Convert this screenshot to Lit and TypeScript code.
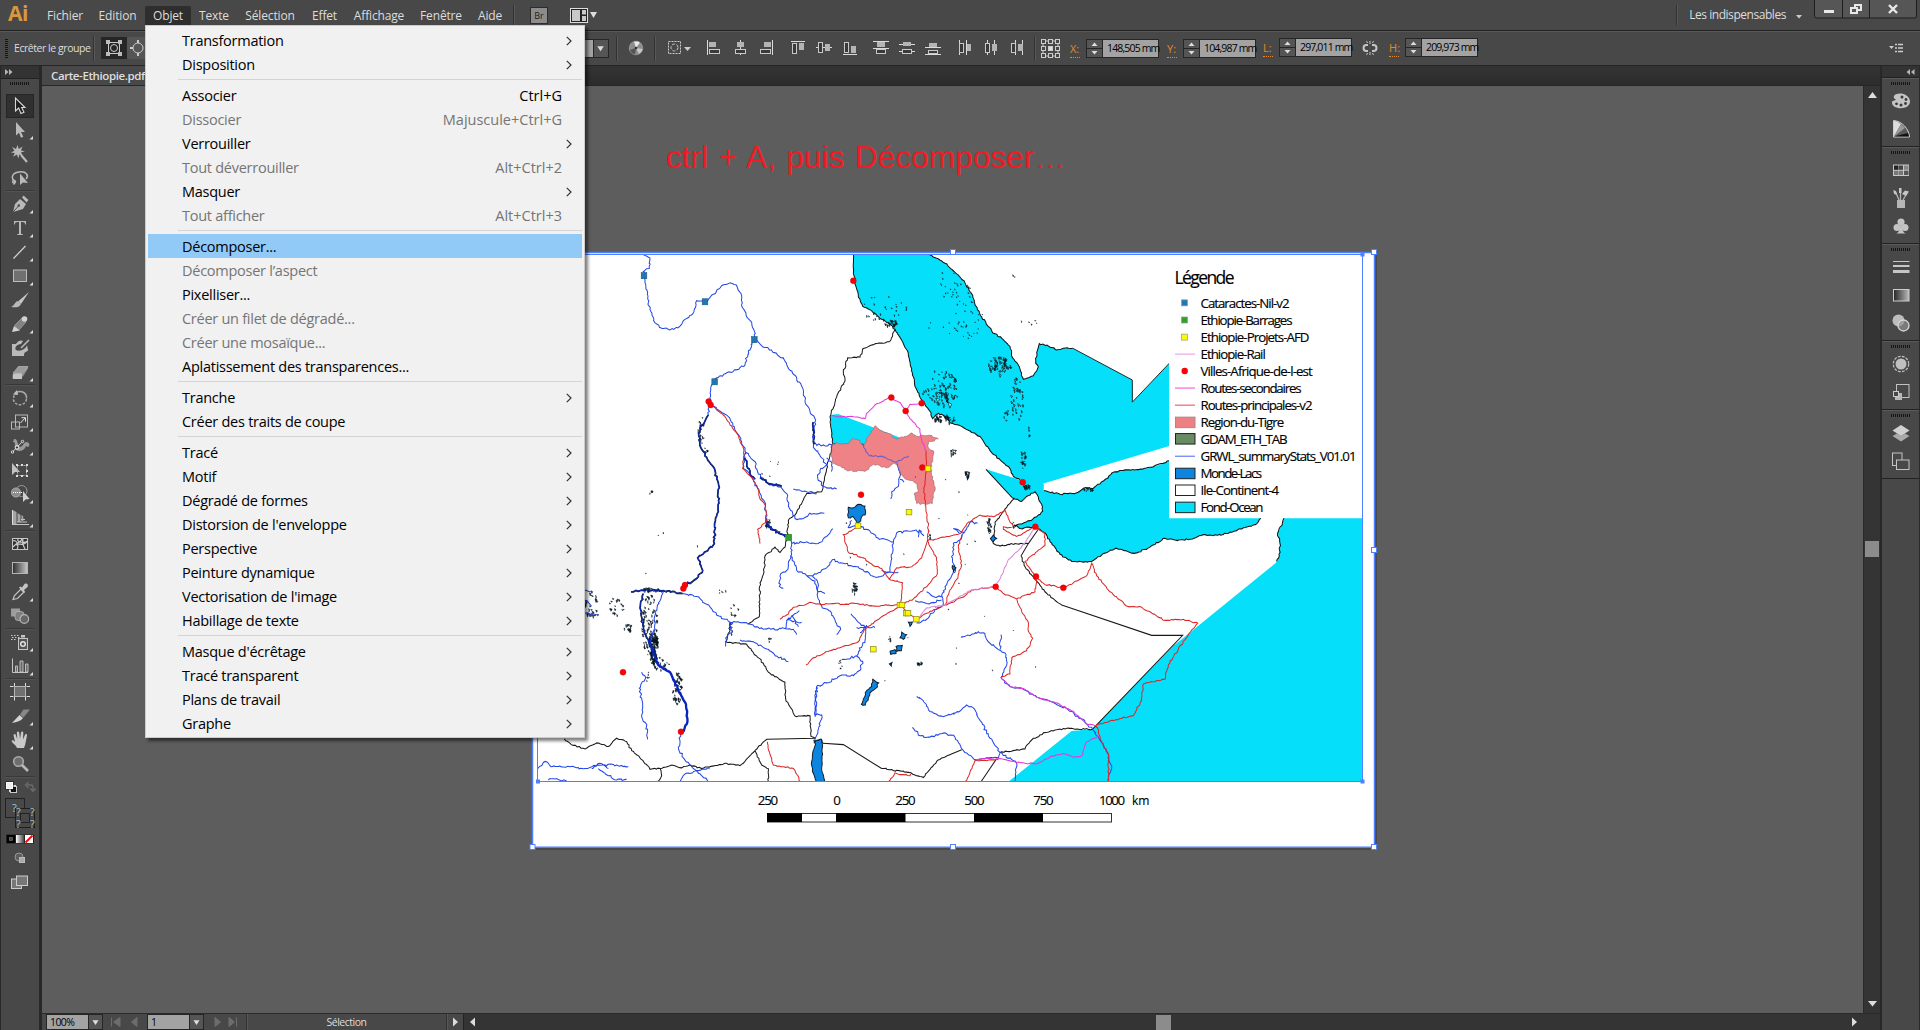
import { LitElement, html, svg, css, nothing, SVGTemplateResult } from "lit";
import { customElement, property } from "lit/decorators.js";

type Pt = [number, number];

/* ---------- geometry helpers ---------- */

// Small seeded generator so coastlines come out the same on every render.
function generator(seed: number) {
  let s = seed >>> 0;
  return () => {
    s = (s * 1664525 + 1013904223) >>> 0;
    return s / 4294967296;
  };
}

// Parses "x,y x,y" and shifts x into the shared map space.
function pts(src: string, dx = 0): Pt[] {
  return src.trim().split(/\s+/).map((p) => {
    const [x, y] = p.split(",").map(Number);
    return [x + dx, y] as Pt;
  });
}

// Polyline with a fine irregular edge; long straight legs can stay straight.
function rough(points: Pt[], amp = 3, close = false, straight = 9999): string {
  const rnd = generator(Math.round(points[0][0] * 7 + points[0][1] * 13));
  const list = close ? [...points, points[0]] : points;
  let d = `M${list[0][0]} ${list[0][1]}`;
  for (let i = 1; i < list.length; i++) {
    const [ax, ay] = list[i - 1];
    const [bx, by] = list[i];
    const len = Math.hypot(bx - ax, by - ay);
    const n = len > straight ? 1 : Math.max(1, Math.round(len / 6));
    for (let k = 1; k < n; k++) {
      const t = k / n;
      const x = ax + (bx - ax) * t + (rnd() - 0.5) * 2 * amp;
      const y = ay + (by - ay) * t + (rnd() - 0.5) * 2 * amp;
      d += `L${x.toFixed(1)} ${y.toFixed(1)}`;
    }
    d += `L${bx} ${by}`;
  }
  return close ? d + "Z" : d;
}

function specks(cx: number, cy: number, rx: number, ry: number, n: number, size = 4): string {
  const rnd = generator(cx * 31 + cy * 17 + n);
  let d = "";
  for (let i = 0; i < n * 0.75; i++) {
    const a = rnd() * Math.PI * 2;
    const r = Math.sqrt(rnd());
    const x = cx + Math.cos(a) * rx * r;
    const y = cy + Math.sin(a) * ry * r;
    const w = 1 + rnd() * size;
    const h = 1 + rnd() * size;
    d += `M${x.toFixed(0)} ${y.toFixed(0)}l${w.toFixed(1)} ${(h / 2).toFixed(1)}l${(-w / 2).toFixed(1)} ${h.toFixed(1)}z`;
  }
  return d;
}

const E = 1200;

/* ---------- map data ---------- */

const YEMEN = pts("28,41 75,65 110,95 135,120 155,150 165,180 185,215 215,255 245,275 270,298 278,330 295,350 310,390 340,380 355,355 347,345 350,315 358,290 385,297 410,308 430,303 458,303", E);
const YEMEN_EDGE = pts("458,303 637,392 637,454 748,345", E);
const ADEN_NORTH = pts("370,682 372,702 385,705 420,712 470,708 490,695 520,695 550,675 580,650 610,645 655,643 700,635 748,618", E);
const SOMALIA = pts("1022,779 1010,795 975,805 920,822 880,828 850,825 810,838 765,840 735,835 690,860 650,876 630,875 588,863 550,878 515,900 490,902 455,900 420,880 390,845 375,820 345,803 300,808 285,800 305,795 350,775 368,760 365,740 345,705 320,718 305,732 277,722 198,642", E);
const AFRICA_COAST = pts("300,672 280,662 270,640 245,620 210,590 180,550 150,535 115,518 90,512 75,495 55,485 38,500 30,480 15,460 0,440 -15,410 -25,360 -35,320 -50,290 -75,250 -90,235 -120,220 -150,195 -172,185 -185,160 -192,130 -198,100 -200,41", E);
const EAST_COAST = pts("1092,779 1085,800 1073,820 1080,850 1078,885 1070,900", E);

function joined(...parts: Pt[][]): string {
  return parts.map((p, i) => rough(p, i % 2 ? 1.5 : 2, false, 110).replace("M", i ? "L" : "M")).join("") + "Z";
}

const OCEAN = joined(YEMEN, YEMEN_EDGE, pts("748,577", E), ADEN_NORTH, pts("748,779", E), SOMALIA, AFRICA_COAST);

const TIGRE = pts("938,570 985,570 1000,555 1015,560 1030,578 1045,550 1065,520 1080,532 1105,542 1125,555 1150,552 1175,540 1190,550 1215,548 1235,547 1255,557 1225,565 1225,582 1240,590 1238,620 1232,640 1237,670 1245,690 1240,710 1237,738 1190,738 1182,710 1195,705 1190,680 1165,672 1140,655 1138,635 1125,625 1100,638 1060,628 1040,645 1010,648 980,645 955,632 940,625 930,600");

const RIVERS: Pt[][] = [
  pts("370,41 390,50 388,80 370,88 375,120 383,165 390,195 405,232 430,248 450,252 478,243 500,220 522,200 530,170 555,173 580,152 605,128 630,120 648,125 665,155 665,180 678,210 695,230 703,255 703,279 685,310 675,350 640,368 600,380 583,397 573,410 570,450 565,490"),
  pts("703,279 725,295 790,330 805,360 830,385 850,420 855,450 870,480 887,505 880,540 880,580 905,610 920,630 900,645 893,665 910,690 950,697"),
  pts("880,570 915,577 945,570"), pts("920,610 936,625 934,648"), pts("820,697 855,703 890,710"),
  pts("572,462 610,485 630,500 655,545 675,590 670,640 690,655 705,680 720,710 735,735 740,790 760,812 805,833 815,850 812,885 830,925 860,940 885,955 893,1000 905,1025 935,1045 950,1075 962,1090 950,1105"),
  pts("675,590 705,620 715,655 745,682 785,695 803,715 805,745 825,780 850,780 870,765 913,765"),
  pts("815,850 860,845 895,850 920,830 938,808"),
  pts("812,885 800,925 782,935 778,970 790,975"),
  pts("860,940 890,935 920,918 937,895 970,905 1010,915 1070,945 1110,930 1120,850 1130,820 1165,815 1205,815"),
  pts("1195,832 1198,812 1212,828"), pts("1085,925 1110,930 1135,930"),
  pts("1120,845 1075,835 1050,815 1010,800 985,805 995,785"),
  pts("875,940 892,955 895,985 915,990"),
  pts("488,990 530,998 560,1020 590,1050 630,1070 680,1072 730,1090 795,1088 820,1090 830,1105"),
  pts("795,1088 800,1065 820,1050 838,1038"), pts("800,1065 845,1070"), pts("815,1050 835,1083"),
  pts("660,1120 700,1125 740,1145 770,1165 805,1180"),
  pts("630,1070 635,1100 617,1115 617,1138"),
  pts("993,1047 1010,1065 1035,1085 1035,1120 1010,1165 1028,1180 1020,1205 1000,1220 960,1220 920,1240 890,1250 887,1330 905,1330 895,1370 885,1400"),
  pts("890,1250 884,1300 886,1335"), pts("1010,1085 1065,1085"), pts("1020,1100 1040,1078"), pts("1010,1165 965,1175"),
  pts("430,985 420,1010 405,1040 405,1090 385,1130"),
  pts("365,1210 377,1225 358,1255 368,1300 365,1330 380,1360 383,1398"),
  pts("53,1480 75,1460 95,1475 150,1475 195,1480 235,1470 290,1470 325,1475"),
  pts("215,1480 240,1465 265,1480"), pts("235,1480 265,1500 290,1512 320,1510"), pts("85,1512 110,1508 140,1515"),
  pts("480,1517 495,1495 540,1485 570,1478"),
  pts("483,1377 475,1420 490,1450 520,1480 545,1500 565,1517"),
  pts("195,980 215,985"), pts("195,1045 230,1050"), pts("195,1010 215,1025"),
  pts("-10,1072 20,1062 45,1035 70,1020 65,995 80,965 95,940 105,930 97,890 100,850 120,840 135,815 150,790 173,793", E),
  pts("1185,1010 1220,1018 1265,1008"), pts("1220,985 1240,998 1268,1000"), pts("100,808 135,818", E),
  pts("1300,808 1318,820"),
  pts("123,1112 150,1108 175,1097 195,1102 205,1125 235,1147 258,1160 260,1190 243,1225 270,1250 310,1258 350,1280 400,1295 455,1320 500,1355 517,1370 535,1390 560,1430 575,1480 565,1517", E),
  pts("240,1147 243,1105", E),
  pts("1190,1278 1210,1290 1230,1320 1270,1335 1305,1325 1340,1302 1360,1310 1380,1345 1410,1395 1440,1435 1490,1465 1485,1517"),
  pts("1177,1365 1200,1388 1230,1392 1275,1380 1305,1392 1325,1425 1365,1455 1435,1450 1440,1435"),
  pts("1025,570 1050,605 1090,608 1130,622 1167,605"),
  pts("1130,622 1140,650 1135,690 1115,705 1112,725"), pts("1140,670 1152,678"),
];

const WIDE_RIVERS: Pt[][] = [
  pts("565,490 540,525 537,560 555,605 580,635 595,680 595,760 585,790 583,850 533,890 548,925 530,948 495,967"),
  pts("740,780 742,800 760,812 795,832"), pts("675,610 690,655 705,670"), pts("720,665 745,682 785,690"),
  pts("488,990 430,982 375,980 333,985"), pts("880,510 880,545 882,572"),
  pts("370,990 360,1030 370,1090 390,1135 415,1190"),
];

const ROADS: Pt[][] = [
  pts("572,462 610,490 650,540 672,590 668,640 700,670 715,700 720,725 737,745 738,790 713,810 720,850"),
  pts("1218,590 1220,640 1212,700 1218,760 1225,800 1222,842 1250,890 1252,935 1225,965 1180,1005 1143,1020"),
  pts("1222,842 1205,890 1175,915 1130,918 1108,950"),
  pts("1010,805 970,825 985,875 1030,890 1060,912 1085,920 1108,950 1148,960 1143,1020"),
  pts("1222,842 1280,830 1320,822 1345,790 1380,770 1420,775 1455,757 1470,790 1480,800"),
  pts("345,803 320,815 290,830 272,822 250,810 250,803 275,805", E),
  pts("1143,1020 1060,1025 1010,1018 900,1020 875,1015 820,1028 800,1050 780,1062"),
  pts("1143,1025 1085,1055 1035,1090 1015,1125 930,1150 880,1170 858,1190"),
  pts("1143,1020 1165,1045 1188,1062 1220,1045 1275,1022 1330,1000 1355,980 1427,970 1450,990 1490,1005 1545,985 1550,955 1547,942 1530,920 1515,900 1575,855 1575,825 1545,803"),
  pts("347,942 375,965 430,973 460,960 500,940 515,905 530,940 570,985 620,1025 665,1028 735,1065 790,1062 833,1073 805,1105 775,1145 745,1190 735,1230 670,1243 665,1290 640,1332 600,1340 530,1357 540,1395 565,1440 565,1517", E),
  pts("290,1005 305,1040 325,1070 325,1095 338,1115 320,1150 275,1170 270,1215 243,1225", E),
  pts("75,1022 90,980 110,950 125,910 115,860 125,825", E),
  pts("742,1405 750,1440 760,1470 820,1480 842,1517"),
  pts("235,1455 165,1458 150,1490 135,1517", E),
  pts("1105,1517 1125,1492 1170,1500 1172,1495"),
];

const MINOR_ROADS: Pt[][] = [
  pts("935,492 960,495 1000,495 1035,500 1040,485 1065,462 1110,440 1140,455 1157,478 1170,460 1205,457"),
  pts("1157,478 1170,500 1200,530 1205,560 1218,590"),
  pts("243,1225 270,1250 310,1256 350,1280 400,1293 455,1318 500,1355 530,1360", E),
  pts("537,1390 500,1405 485,1445 460,1448 430,1438 390,1447 350,1467 290,1463 240,1452 170,1454", E),
];

const RAIL = pts("345,803 320,840 295,870 265,895 250,930 227,970 155,980 75,1022 20,1030 0,1055", E);

const BORDERS: Pt[][] = [
  pts("1125,250 1108,285 1060,293 1028,305 1020,328 983,330 970,370 975,395 950,440 930,495 938,570 930,600 915,660 905,705 860,710 825,770 805,785 800,840 795,860 780,875 765,860 735,885 732,930 720,960 718,1055 685,1075"),
  pts("630,1070 628,1098 617,1125 680,1132 700,1155 730,1185 745,1210 795,1238 797,1285 825,1333 870,1332 873,1390 887,1395"),
  pts("740,1398 705,1430 660,1472 615,1465 545,1480 510,1470 485,1478 455,1470 420,1480 390,1482 360,1450 335,1430 320,1405 290,1395 265,1418 230,1408 195,1425 160,1415 133,1397"),
  pts("705,1430 725,1470 745,1480 745,1517"), pts("420,1480 425,1500 412,1517"),
  pts("1085,1480 1160,1490 1210,1505 1250,1460 1280,1445"),
  pts("283,722 225,790 220,850 240,857 285,850 325,850", E),
  pts("303,885 315,915 345,950 375,985 425,1022", E),
  pts("517,1370 430,1368 370,1380 335,1400 315,1425 240,1435", E),
];

const STRAIGHT_BORDERS = [
  "M887 1395L740 1398", "M908 1409L970 1413L1085 1480", "M1280 1445L1325 1427", "M1555 810L1525 850L1503 885",
  "M1625 1022L1895 1107H1988L1717 1370", "M1428 1455L1383 1517",
];

const LAKES = [
  "985,748 1000,750 1015,740 1035,745 1037,765 1025,775 1015,795 1000,775 985,778",
  "887,1402 905,1398 908,1440 905,1480 913,1517 890,1517 878,1490 875,1460",
  "1058,1230 1076,1240 1068,1255 1050,1268 1045,1282 1036,1302 1024,1300 1030,1285 1040,1262 1055,1250",
  "1145,1098 1160,1105 1150,1118 1140,1114", "1128,1138 1147,1135 1144,1150 1130,1152", "1110,1152 1125,1147 1128,1158 1112,1160",
  "1108,1187 1116,1183 1114,1193", "1165,1070 1177,1070 1170,1082", "1420,826 1430,836 1420,845 1411,836", "1297,912 1308,918 1300,930",
];

const SPECKS_SEA = [
  specks(1095, 190, 65, 40, 40, 3), specks(1260, 410, 60, 48, 90, 4), specks(1267, 440, 26, 24, 26, 12),
  specks(1435, 350, 36, 24, 80, 6), specks(1490, 440, 20, 65, 50, 5), specks(1340, 190, 50, 90, 50, 2),
  specks(1285, 120, 30, 45, 22, 2), specks(1508, 610, 8, 30, 24, 5), specks(1525, 535, 3, 25, 6),
  specks(1455, 485, 9, 20, 10), specks(1310, 230, 90, 60, 15, 2), specks(1518, 688, 12, 8, 20, 6),
];
const SPECKS_LAND = [
  specks(1270, 500, 32, 12, 40, 7), specks(1112, 232, 20, 9, 30, 6), specks(1705, 697, 20, 5, 16, 5),
  specks(388, 1080, 24, 90, 120, 5), specks(398, 1140, 14, 45, 130, 7), specks(420, 1185, 30, 18, 30, 6),
  specks(470, 1255, 14, 45, 60, 6), specks(395, 978, 30, 6, 40, 5), specks(215, 1020, 22, 40, 36, 6),
  specks(285, 1025, 25, 26, 24, 5), specks(322, 1085, 15, 10, 16, 6), specks(640, 1035, 14, 18, 10, 4),
  specks(605, 985, 12, 14, 7, 3), specks(1002, 972, 7, 16, 18, 7), specks(1405, 800, 6, 22, 20, 6),
  specks(1297, 592, 8, 9, 14, 6), specks(1340, 653, 6, 9, 14, 7), specks(745, 645, 40, 40, 7, 2),
  specks(750, 1118, 10, 5, 6, 4), specks(1195, 1183, 9, 5, 7, 6), specks(960, 1190, 8, 14, 9, 2),
  specks(1108, 1120, 3, 18, 8, 3), specks(542, 535, 8, 45, 24, 5), specks(632, 1085, 5, 22, 12, 4),
  specks(556, 600, 8, 20, 8, 4), specks(742, 792, 7, 12, 18, 5), specks(395, 703, 4, 4, 4, 5),
  specks(430, 800, 130, 150, 6, 3), specks(1230, 826, 5, 10, 8, 4), specks(1232, 800, 260, 240, 22, 2),
  specks(1500, 230, 60, 8, 6, 3), specks(1480, 100, 10, 8, 2, 3), specks(1300, 1200, 300, 200, 12, 2),
  specks(892, 1403, 14, 7, 22, 6), specks(1480, 797, 8, 8, 8, 4), specks(380, 1225, 8, 22, 8, 3),
];

const CITIES: Pt[] = [
  [1000, 114], [566, 452], [572, 462], [1114, 441], [1205, 457], [1157, 479], [1207, 637], [1023, 713],
  [495, 966], [490, 976], [309, 1210], [483, 1377], [1508, 678], [1546, 803], [1548, 942], [1427, 971], [1630, 974],
];
const CATARACTS: Pt[] = [[372, 100], [555, 173], [703, 279], [584, 397]];
const PROJECTS: Pt[] = [[1224, 640], [1167, 762], [1014, 800], [1140, 1022], [1146, 1022], [1159, 1045], [1164, 1045], [1189, 1062], [1060, 1146]];

interface LegendRow { label: string; y: number; w: number; kind: string; color: string }
const LEGEND: LegendRow[] = [
  { label: "Cataractes-Nil-v2", y: 190, w: 89, kind: "sq", color: "#1f78b4" },
  { label: "Ethiopie-Barrages", y: 238, w: 92, kind: "sq", color: "#33a02c" },
  { label: "Ethiopie-Projets-AFD", y: 286, w: 109, kind: "sq", color: "#fdf900" },
  { label: "Ethiopie-Rail", y: 333, w: 65.3, kind: "line", color: "#eeb3ee" },
  { label: "Villes-Afrique-de-l-est", y: 381, w: 112.3, kind: "dot", color: "#fb0006" },
  { label: "Routes-secondaires", y: 428, w: 101, kind: "line", color: "#f977e4" },
  { label: "Routes-principales-v2", y: 476, w: 112, kind: "line", color: "#ee7b7b" },
  { label: "Region-du-Tigre", y: 524, w: 83.7, kind: "fillp", color: "#ed8083" },
  { label: "GDAM_ETH_TAB", y: 570, w: 87, kind: "fill", color: "#688b64" },
  { label: "GRWL_summaryStats_V01.01", y: 619, w: 156, kind: "line", color: "#7b90fb" },
  { label: "Monde-Lacs", y: 667, w: 61.7, kind: "fill", color: "#0b85e0" },
  { label: "Ile-Continent-4", y: 714, w: 78.7, kind: "fill", color: "#ffffff" },
  { label: "Fond-Ocean", y: 762, w: 63, kind: "fill", color: "#05dffa" },
];

/* ---------- menu data ---------- */

interface Entry { label: string; key?: string; sub?: boolean; off?: boolean; hot?: boolean }
const MENU: Entry[][] = [
  [{ label: "Transformation", sub: true }, { label: "Disposition", sub: true }],
  [
    { label: "Associer", key: "Ctrl+G" }, { label: "Dissocier", key: "Majuscule+Ctrl+G", off: true },
    { label: "Verrouiller", sub: true }, { label: "Tout déverrouiller", key: "Alt+Ctrl+2", off: true },
    { label: "Masquer", sub: true }, { label: "Tout afficher", key: "Alt+Ctrl+3", off: true },
  ],
  [
    { label: "Décomposer...", hot: true }, { label: "Décomposer l’aspect", off: true }, { label: "Pixelliser..." },
    { label: "Créer un filet de dégradé...", off: true }, { label: "Créer une mosaïque...", off: true },
    { label: "Aplatissement des transparences..." },
  ],
  [{ label: "Tranche", sub: true }, { label: "Créer des traits de coupe" }],
  ["Tracé", "Motif", "Dégradé de formes", "Distorsion de l'enveloppe", "Perspective", "Peinture dynamique",
    "Vectorisation de l'image", "Habillage de texte"].map((label) => ({ label, sub: true })),
  ["Masque d'écrêtage", "Tracé transparent", "Plans de travail", "Graphe"].map((label) => ({ label, sub: true })),
];

/* ---------- tool icons: x spans 6..34, y is centred on 0 ---------- */

const C = "#b9b9b9";
const TOOLS: { art: SVGTemplateResult; fly?: boolean; active?: boolean; gap?: boolean }[] = [
  { active: true, art: svg`<path d="M15.500-8V5l3.200-3L21 7.500l3-1.200-2.300-4.800H25z" fill="#1e1e1e" stroke="#d8d8d8" stroke-width="1.100"/>` },
  { fly: true, art: svg`<path d="M16-8V5.500l3-2.800 2 5 2.300-1-2.200-4.800H25z" fill="${C}"/>` },
  { art: svg`<path d="M17.500-9l1.300 4 3.700-2.600-1.600 4 4 .8-4 1.300 2 3.600-3.600-1.700-.9 4-1.500-4L13 2.700l1.800-3.700-4-.6 3.700-1.600L12-7l4 2z" fill="${C}"/><path d="M21 1l6 7" stroke="${C}" stroke-width="2.200"/>` },
  { art: svg`<path d="M15 3c-4-2-4-8 4-9s10 4 7 7M14 2.500c2 0 2 2.500 0 2.500s-1.500-3 0-2.500c1 1 1 3-.5 4" fill="none" stroke="${C}" stroke-width="1.500"/><path d="M20-4.500V7l3-2.500 5 .5z" fill="${C}"/>` },
  { gap: true, fly: true, art: svg`<path d="M13 8l2-8 5-5 6 5-3 5zM22-6.500L23.500-8.500 28.500-4 26.500-1.500z" fill="${C}"/><path d="M13 8l5.500-6" stroke="#484848"/><circle cx="18.800" cy="1.500" r="1.200" fill="#484848"/>` },
  { fly: true, art: svg`<path d="M14-7h12v3.500h-.8C25-5.200 24.500-6 21-6V5c0 1 .5 1.200 2 1.300V7h-6v-.7c1.500 0 2-.3 2-1.300V-6c-3.500 0-4 .8-4.200 2.500H14z" fill="${C}"/>` },
  { fly: true, art: svg`<path d="M13.500 6.500L25.500-6" stroke="#cfcfcf" stroke-width="1.300"/>` },
  { fly: true, art: svg`<rect x="13.500" y="-6" width="13" height="11.500" fill="#707070" stroke="#bdbdbd"/>` },
  { art: svg`<path d="M29-8l-8 12-3-2.500z" fill="#c6c6c6"/><path d="M17.500 1l3.500 3c-2 4-6 3.500-10 3 3-1 4-5 6.500-6z" fill="${C}"/>` },
  { fly: true, art: svg`<path d="M12 8l2-6 6 4.500z" fill="#d2d2d2"/><path d="M14.500 1.500L22-6l4 4-7 8z" fill="#828282" stroke="#a8a8a8" stroke-width=".7"/><circle cx="24.500" cy="-5" r="2.800" fill="#d2d2d2"/>` },
  { art: svg`<path d="M12-4h4c2-4 6-4 7-3l-2 3c-4 0-7 4-5 6 4 2 10-1 11-5l1 5c0 2-4 1-4 5v1H12z" fill="${C}"/><path d="M29-8l-8 8" stroke="${C}" stroke-width="1.600"/>` },
  { fly: true, art: svg`<path d="M18-5.500h8.500c1.500 0 2 .8 1.500 2L23 4.500 13 6z" fill="#8e8e8e"/><path d="M13 1l5.500-6.500h9.500L22 1.500z" fill="#9a9a9a" stroke="#bbb" stroke-width=".6"/><path d="M13 1.500h9V7h-8.500c-1 0-1-1-.5-5.500z" fill="#c4c4c4"/>` },
  { gap: true, fly: true, art: svg`<path d="M16-5.500c6-3 11 1 10.500 6" fill="none" stroke="#a9a9a9" stroke-width="1.500"/><path d="M26.500 1c-1 7-11 8-13 1l.5-5" fill="none" stroke="#a9a9a9" stroke-width="1.500" stroke-dasharray="2.500 1.500"/><path d="M13-3.500l4-4.500 1 5z" fill="#c2c2c2"/>` },
  { fly: true, art: svg`<rect x="15.500" y="-7" width="12" height="12" fill="none" stroke="#b8b8b8"/><rect x="11.500" y="0" width="8" height="7" fill="none" stroke="#b8b8b8"/><path d="M20.500 1l4.500-5m-3.500-.3h4v4" fill="none" stroke="#e0e0e0"/>` },
  { fly: true, art: svg`<path d="M14-7c4-1 3 6 6 8 4-1 3-5 7-5 3 1 3 4 1 5-2-1-2-1-3 1-2 3-6 4-9 2-3-3 1-8-3-8z" fill="#9a9a9a"/><path d="M12.500 6L22.500-4.500" stroke="#d8d8d8"/><circle cx="12.500" cy="6" r="1.200" fill="#484848" stroke="#ddd"/><circle cx="17" cy="1.500" r="1.700" fill="#333" stroke="#fff"/><circle cx="22.500" cy="-4.500" r="1.200" fill="#484848" stroke="#ddd"/>` },
  { art: svg`<path d="M12-7V5l3-3h5z" fill="#c2c2c2"/><rect x="17.500" y="-4.500" width="9" height="10" fill="none" stroke="#aaa" stroke-dasharray="2 1"/><path d="M16-6h2v2h-2zM21-6h2v2h-2zM26-6h2v2h-2zM26 0h2v2h-2zM16 5h2v2h-2zM21 5h2v2h-2zM26 5h2v2h-2z" fill="#ddd"/>` },
  { fly: true, art: svg`<circle cx="16" cy="-1.500" r="4.500" fill="#8b8b8b" stroke="#b0b0b0"/><circle cx="21.500" cy="-3" r="5.500" fill="none" stroke="#999"/><path d="M13-1.500h11" stroke="#fff" stroke-dasharray="1 1"/><path d="M23-3V8l2.500-2.500 4-.5z" fill="#d0d0d0"/>` },
  { fly: true, art: svg`<path d="M12.500-8l4 2v12h-4zM17.500-5l3 2v7h-3zM21.500-3l1.800 1.500V3h-1.800z" fill="#a5a5a5"/><path d="M12 6.500h17M17 4h10M21 1.500h4" stroke="#c5c5c5"/><path d="M12.500-8v14" stroke="#ddd"/>` },
  { gap: true, art: svg`<rect x="12.500" y="-5.500" width="15" height="11" fill="#333" stroke="#c5c5c5"/><path d="M13-3c4-2 6 6 4 8M18-5c-2 4 8 4 9 2M16 1c4-3 5 2 11-3M23-5c-1 4 0 6 2 10M13 3c5-6 8-4 9-8" fill="none" stroke="#c9c9c9" stroke-width="1.200"/>` },
  { art: svg`<defs><linearGradient id="tg"><stop offset="0" stop-color="#2c2c2c"/><stop offset="1" stop-color="#c8c8c8"/></linearGradient></defs><rect x="12.500" y="-5.500" width="15" height="11" fill="url(#tg)" stroke="#b5b5b5"/>` },
  { fly: true, art: svg`<path d="M13 7.500l1.500-4L21-3l3 3-6.500 6.500z" fill="none" stroke="#c5c5c5" stroke-width="1.200"/><path d="M19-4.500l1.500-1 1.500 1 2.500-3.500c2-1.500 4.500.8 3 3L24-2l1 2-1.200 1.300z" fill="#c5c5c5"/>` },
  { art: svg`<path d="M11-7.500h9v3l-5 5h-4z" fill="#9c9c9c"/><rect x="15" y="-4.500" width="9" height="9" rx="3" fill="#7f7f7f" stroke="#b5b5b5" stroke-width=".8"/><circle cx="24.300" cy="3" r="4.300" fill="#666" stroke="#b5b5b5" stroke-width="1.200"/>` },
  { gap: true, fly: true, art: svg`<rect x="18.500" y="-3.500" width="9" height="11" fill="#555" stroke="#c5c5c5"/><rect x="21" y="-7" width="4" height="2.500" fill="#c5c5c5"/><circle cx="23" cy="2" r="2.300" fill="none" stroke="#e0e0e0" stroke-width="1.500"/><path d="M11-6.500h9M12-4.500h8M11-2.500h6" stroke="#ccc" stroke-dasharray="1.500 1.500"/>` },
  { fly: true, art: svg`<path d="M12.500-7.500V6.500H28" fill="none" stroke="#c5c5c5"/><path d="M15.500 6V0h2v6zM20 6v-11h3v11zM25.500 6v-8h2.500v8z" fill="#6b6b6b" stroke="#c5c5c5" stroke-width=".9"/>` },
  { gap: true, art: svg`<rect x="14.500" y="-5.500" width="11" height="10" fill="#707070" stroke="#b5b5b5"/><path d="M14.500-9v3M25.500-9v3M14.500 5v3.500M25.500 5v3.500M10-5.500h3.500M26.500-5.500H30M10 4.500h3.500M26.500 4.500H30" stroke="#ddd"/>` },
  { fly: true, art: svg`<path d="M12 7l7.500-8 3.500 3c-2 3-6 4-11 5z" fill="#d5d5d5"/><path d="M20-1.500l3.500-5H30L23.500 1.500z" fill="#888"/>` },
  { fly: true, art: svg`<path d="M17 8c-1-3-4-4-5.500-7 .5-1.500 2-1 3.500 1l-1.500-7c.5-1.500 2-1.500 2.300 0l1.500 4.500-.5-7c.5-1.500 2-1.500 2.400 0l.8 6.500 1-6.500c.5-1.500 2.300-1.200 2.300.2L23-.5l2-4.700c.6-1.200 2.200-.7 2 .7L25.500 3c-.3 2-1 3.500-1.500 5z" fill="#c9c9c9"/>` },
  { art: svg`<circle cx="18.500" cy="-2.500" r="4.800" fill="#6e6e6e" stroke="#aaa" stroke-width="1.600"/><path d="M22 1l6 6" stroke="#b9b9b9" stroke-width="2.600"/>` },
];

/* ---------- dock icons: 24x24, centred on 0,0 ---------- */

const DOCK: SVGTemplateResult[][] = [
  [
    svg`<path d="M-9 1c0-1.500 3-1 4-2.500-3-1-3-4 0-5.200C0-9 8-6.500 9 0c.5 5-5 7.500-10 7.200C-6 7-9.500 4-9 1z" fill="#c4c4c4"/><g fill="#3a3a3a"><circle cx="1" cy="-4" r="1.500"/><circle cx="5" cy="-1.500" r="1.400"/><circle cx="4.500" cy="2.500" r="1.400"/><circle cx="0" cy="4" r="1.500"/><circle cx="-4.500" cy="2.800" r="1.400"/></g>`,
    svg`<path d="M-7.500 8V-8.500C1-8 8 0 8.500 8z" fill="#5a5a5a" stroke="#cfcfcf"/><path d="M-7 7.500V-8c3 0 5 1.500 7 3z" fill="#ddd"/><path d="M-7 7.500L0-5l4 4z" fill="#999"/><path d="M-7 7.500L7 4l1 3.500z" fill="#111"/>`,
  ],
  [
    svg`<rect x="-8" y="-5.500" width="16" height="11.500" fill="#c8c8c8"/><g><path d="M-7-4.500h4.500v4.300H-7z" fill="#222"/><path d="M-2-4.500h4v4.300h-4z" fill="#444"/><path d="M3-4.500h4.500v4.300H3z" fill="#888"/><path d="M-7 .7h4.500V5H-7zM-2 .7h4V5h-4z" fill="#777"/><path d="M3 .7h4.500V5H3z" fill="#555"/></g>`,
    svg`<path d="M-4 2h8v8h-8z" fill="#b5b5b5"/><path d="M-2 2l-3-7M-.5 2v-9M2 2l4-7" stroke="#b5b5b5" stroke-width="1.300"/><path d="M-7.500-8c0 4 1 5 3 4.500 1-2-.5-4-3-4.500zM-2-10h2.500v5H-2zM1-4l3-3.500 4 1L5-2z" fill="#c6c6c6"/>`,
    svg`<circle cx="0" cy="-4" r="3.600" fill="#c4c4c4"/><circle cx="-4" cy="1.500" r="3.500" fill="#c4c4c4"/><circle cx="4" cy="1.500" r="3.500" fill="#c4c4c4"/><path d="M-.8-2H.8c0 5 1 8.500 4 9.500h-9.600c3-1 4-4.500 4-9.500z" fill="#c4c4c4"/>`,
  ],
  [
    svg`<path d="M-8-5.500H8.500" stroke="#c6c6c6"/><path d="M-8-1H8.500" stroke="#c6c6c6" stroke-width="2"/><path d="M-8 4.500H8.500" stroke="#c6c6c6" stroke-width="3"/>`,
    svg`<defs><linearGradient id="dg"><stop offset="0" stop-color="#252525"/><stop offset="1" stop-color="#bbb"/></linearGradient></defs><rect x="-7.500" y="-5.500" width="15.500" height="11.500" fill="url(#dg)" stroke="#ccc"/>`,
    svg`<circle cx="-2.500" cy="-2.500" r="6" fill="#bdbdbd"/><circle cx="2.500" cy="2.500" r="5.500" fill="#909090" fill-opacity=".7" stroke="#d5d5d5" stroke-width="1.300"/>`,
  ],
  [
    svg`<circle r="5.500" fill="#c0c0c0"/><circle r="7.700" fill="none" stroke="#c0c0c0" stroke-width="1.200" stroke-dasharray="2.800 1.300"/>`,
    svg`<rect x="-4.500" y="-7.500" width="12.500" height="13" fill="none" stroke="#c0c0c0"/><rect x="-6" y="1" width="7" height="7" fill="#b8b8b8"/><rect x="-7.500" y="-.5" width="5" height="5" fill="#484848" stroke="#ccc"/>`,
  ],
  [
    svg`<path d="M-8.500 3L-4 .5 0 3l4-2.500L8.500 3 0 8.500z" fill="#aaa"/><path d="M0-8l8.500 5.500L0 3l-8.500-5.500z" fill="#d0d0d0"/>`,
    svg`<rect x="-8.500" y="-8" width="9.500" height="12.500" fill="none" stroke="#c4c4c4"/><rect x="-4.500" y="-1" width="12.500" height="9.500" fill="#484848" stroke="#c4c4c4"/>`,
  ],
];

/* ---------- alignment icons, 16x16 ---------- */

const F = "#b4b4b4";
const block = (x: number, y: number, w: number, h: number, solid: boolean) =>
  solid
    ? svg`<rect x=${x} y=${y} width=${w} height=${h} fill=${F}/>`
    : svg`<rect x=${x + 0.5} y=${y + 0.5} width=${w - 1} height=${h - 1} fill="#3a3a3a" stroke="#c8c8c8"/>`;
const rule = (d: string) => svg`<path d=${d} stroke="#dadada" fill="none"/>`;
const ALIGN: SVGTemplateResult[][] = [
  [
    svg`${rule("M1.500 0v15")}${block(3, 2, 7, 5, true)}${block(3, 9, 11, 5, false)}`,
    svg`${rule("M8.500 0v15")}${block(5, 2, 7, 5, true)}${block(3, 9, 11, 5, false)}`,
    svg`${rule("M14.500 0v15")}${block(6, 2, 7, 5, true)}${block(2, 9, 11, 5, false)}`,
  ],
  [
    svg`${rule("M1 1.500h14")}${block(2, 3, 5, 11, false)}${block(9, 3, 5, 7, true)}`,
    svg`${rule("M0 7.500h16")}${block(2, 2, 5, 11, false)}${block(9, 4, 5, 7, true)}`,
    svg`${rule("M1 14.500h14")}${block(2, 2, 5, 11, false)}${block(9, 6, 5, 7, true)}`,
  ],
  [
    svg`${rule("M0 1.500h16M0 8.500h16")}${block(4, 2, 8, 5, true)}${block(3, 9, 10, 5, false)}`,
    svg`${rule("M0 4.500h16M0 11.500h16")}${block(4, 2, 8, 4, true)}${block(3, 9, 10, 5, false)}`,
    svg`${rule("M0 7.500h16M0 14.500h16")}${block(4, 3, 8, 4, true)}${block(3, 10, 10, 4, false)}`,
  ],
  [
    svg`${rule("M2.500 0v15M9.500 0v15")}${block(2, 3, 5, 10, false)}${block(10, 4, 4, 7, true)}`,
    svg`${rule("M4.500 0v15M11.500 0v15")}${block(2, 3, 5, 10, false)}${block(9, 4, 5, 7, true)}`,
    svg`${rule("M6.500 0v15M13.500 0v15")}${block(2, 3, 5, 10, false)}${block(9, 4, 5, 7, true)}`,
  ],
];

/* ---------- elements ---------- */

@customElement("object-menu")
class ObjectMenu extends LitElement {
  static styles = css`
    :host { display: block; box-sizing: border-box; width: 440px; border: 1px solid #ccc; background: #f1f1f1; padding: 2px;
      box-shadow: 3px 3px 3px rgba(0, 0, 0, 0.5); font: 14.5px/22px "Open Sans", "Noto Sans", sans-serif; color: #000; }
    .row { display: flex; box-sizing: border-box; height: 24px; align-items: center; padding: 2px 10px 0 34px; white-space: nowrap; }
    .label { flex: 1; letter-spacing: -0.26px; }
    .key { letter-spacing: 0; padding-right: 10px; }
    .off { color: #757575; }
    .hot { background: #91c9f7; }
    .rule { height: 1px; margin: 3px 0 3px 30px; background: #d4d4d4; }
    .arrow { width: 6px; height: 10px; margin-top: -1px; fill: none; stroke: #333; stroke-width: 1.2; }
  `;
  render() {
    return MENU.map((group, i) => html`
      ${i ? html`<div class="rule"></div>` : nothing}
      ${group.map((e) => html`
        <div class="row ${e.off ? "off" : ""} ${e.hot ? "hot" : ""}">
          <span class="label">${e.label}</span>
          ${e.key ? html`<span class="key">${e.key}</span>` : nothing}
          ${e.sub ? html`<svg class="arrow" viewBox="0 0 6 10"><path d="M.8 .8L5 5 .8 9.200"/></svg>` : nothing}
        </div>`)}`);
  }
}

@customElement("map-canvas")
class MapCanvas extends LitElement {
  static styles = css`
    :host { display: block; flex: 1; min-width: 0; background: #5d5d5d; }
    .art { display: block; width: 1821px; height: 927px; }
    .note { font-family: "Liberation Sans", Arial, sans-serif; font-size: 31.4px; word-spacing: 1.5px; fill: #ee1c23; }
    .txt { font-family: "Open Sans", "Noto Sans", sans-serif; font-size: 13.3px; fill: #000; stroke: #000; stroke-width: 0.15; }
    .title { font-size: 17.5px; }
    .mid { text-anchor: middle; }
    .line { fill: none; }
  `;
  private legendRow(r: LegendRow) {
    const y = 240 + r.y / 2.8;
    const cy = y - 5;
    const mark =
      r.kind === "sq" ? svg`<rect x="1181.500" y=${cy - 3} width="6" height="6" fill=${r.color} stroke="#999" stroke-width=".7"/>`
      : r.kind === "dot" ? svg`<circle cx="1184.700" cy=${cy} r="3.200" fill=${r.color}/>`
      : r.kind === "line" ? svg`<path d="M1175 ${cy + 0.2}h20" stroke=${r.color} stroke-width="1.400"/>`
      : svg`<rect x="1175.500" y=${cy - 5} width="19.500" height="10.500" fill=${r.color} stroke=${r.kind === "fillp" ? "#a88" : "#222"}/>`;
    return svg`${mark}<text class="txt" x="1200.500" y=${y} textLength=${r.w} lengthAdjust="spacing">${r.label}</text>`;
  }
  private lines(list: Pt[][], color: string, width: number, amp: number) {
    return svg`<path class="line" d=${list.map((l) => rough(l, amp)).join("")} stroke=${color} stroke-width=${width}/>`;
  }
  private handle(x: number, y: number) {
    return svg`<rect x=${x - 2.5} y=${y - 2.5} width="5" height="5" fill="#fff" stroke="#4f80ff"/>`;
  }
  render() {
    const blue = "#4f80ff";
    return html`<svg class="art" viewBox="42 86 1821 927">
      <path d="M1375 254h2v596H534v-2h841z" fill="#3d3d3d" opacity=".6"/>
      <rect x="532" y="252" width="842.500" height="595" fill="#fff"/>
      <defs><clipPath id="frame"><rect x="537.500" y="254.500" width="825" height="527.500"/></clipPath></defs>
      <g clip-path="url(#frame)">
        <g transform="translate(520 240) scale(.333333 .357143)">
          <path d=${OCEAN} fill="#05dffa"/>
          <path d="M2292 779L2285 800L2273 820L2280 850L2278 885L2268 904L1985 1118L1960 1136L1717 1370L1655 1375L1465 1517H2530V779Z" fill="#05dffa"/>
          <path d="M930 490L955 487L1145 555L1100 575H938z" fill="#05dffa"/>
          <path d=${rough(TIGRE, 3, true)} fill="#ee8386"/>
          <path class="line" d=${[YEMEN, ADEN_NORTH.slice(1), SOMALIA, AFRICA_COAST, EAST_COAST].map((l) => rough(l, 2, false, 110)).join("")} stroke="#111" stroke-width="3"/>
          <path class="line" d="M1658 303L1837 392V454L1948 345" stroke="#111" stroke-width="2.600"/>
          <path d=${SPECKS_SEA.join("")} fill="#9ff" stroke="#02202a" stroke-width="2"/>
          <path d=${SPECKS_LAND.join("")} fill="#0a2233" stroke="#0a1a22" stroke-width="1.400"/>
          <path class="line" d=${BORDERS.map((l) => rough(l, 2)).join("") + STRAIGHT_BORDERS.join("")} stroke="#181818" stroke-width="3"/>
          ${this.lines(RIVERS, "#2146e8", 3, 3)}
          ${this.lines(WIDE_RIVERS, "#04124a", 5, 3)}
          ${this.lines(WIDE_RIVERS, "#1236d0", 2.5, 3)}
          <path class="line" d=${rough(pts("385,1120 415,1190 450,1210 475,1260 498,1300 502,1350 490,1377"), 2)} stroke="#0a24c0" stroke-width="7"/>
          <path d=${rough(TIGRE, 3, true)} fill="#ee8386" fill-opacity=".4" stroke="#8c6a6a" stroke-width="1.600"/>
          ${LAKES.map((l) => svg`<path d=${rough(pts(l), 2, true)} fill="#0b85e0" stroke="#0a1a2a" stroke-width="2.800"/>`)}
          ${this.lines(ROADS, "#dc2626", 3, 2)}
          ${this.lines(MINOR_ROADS, "#e63ad8", 3, 1.6)}
          ${this.lines([RAIL], "#dc86d8", 3, 1.2)}
          ${CATARACTS.map(([x, y]) => svg`<rect x=${x - 8.5} y=${y - 8.5} width="17" height="17" fill="#1f78b4" stroke="#14507a" stroke-width="1.500"/>`)}
          <rect x="797" y="824" width="18" height="17" fill="#33a02c" stroke="#1c7018" stroke-width="1.500"/>
          ${CITIES.map(([x, y]) => svg`<ellipse cx=${x} cy=${y} rx="9" ry="8.400" fill="#fb0006" stroke="#b00" stroke-width="1"/>`)}
          ${PROJECTS.map(([x, y]) => svg`<rect x=${x - 8.5} y=${y - 7.5} width="17" height="15" fill="#fdf900" stroke="#8a8a20" stroke-width="2"/>`)}
        </g>
        <rect x="1169.300" y="254" width="194" height="264" fill="#fff"/>
      </g>
      <text class="txt title" x="1174.500" y="283.500" textLength="60" lengthAdjust="spacing">Légende</text>
      ${LEGEND.map((r) => this.legendRow(r))}

      ${([["250", 768], ["0", 837], ["250", 905.5], ["500", 974.5], ["750", 1043.5]] as [string, number][]).map(
        ([t, x]) => svg`<text class="txt mid" x=${x} y="804.500" textLength=${t.length * 6.8} lengthAdjust="spacing">${t}</text>`)}
      <text class="txt" x="1099" y="804.500" textLength="26" lengthAdjust="spacing">1000</text>
      <text class="txt" x="1132" y="804.500" textLength="17.500" lengthAdjust="spacingAndGlyphs">km</text>
      <rect x="767.500" y="813.500" width="344" height="8.500" fill="#fff" stroke="#333"/>
      <path d="M767 813h35v9h-35zM836 813h69.500v9H836zM974 813h69v9h-69z" fill="#000"/>

      <rect x="537.500" y="254.500" width="825" height="527" fill="none" stroke=${blue}/>
      <path d="M532.500 252.500V847.200H1374.500V252.500z" fill="none" stroke=${blue} stroke-width="1.500"/>
      <path d="M1360.500 252.500h4v4h-4zM1360.500 779.500h4v4h-4zM536 779.500h4v4h-4z" fill=${blue}/>
      ${[[953, 252], [1374, 252], [1374, 550], [532.5, 847], [953, 847], [1374, 847]].map(([x, y]) => this.handle(x, y))}
      <text class="note" x="666" y="168" textLength="400">ctrl + A, puis Décomposer…</text>
    </svg>`;
  }
}

@customElement("tool-rail")
class ToolRail extends LitElement {
  static styles = css`
    :host { display: flex; flex-direction: column; box-sizing: border-box; width: 42px; border-left: 1px solid #282828; border-right: 3px solid #282828; background: #484848; }
    .head { height: 12px; flex: none; background: #333; border-bottom: 1px solid #222; }
    .chev { display: block; width: 20px; height: 12px; fill: #b5b5b5; }
    .grip { flex: none; width: 20px; height: 3px; margin: 3px 0 9px 9px; background: repeating-linear-gradient(90deg, #151515 0 1px, transparent 1px 2px); }
    .cell { flex: none; box-sizing: border-box; width: 28px; height: 24px; margin-left: 5px; }
    .sep { flex: none; height: 2px; margin: 0 4px; background: #383838; border-bottom: 1px solid #535353; box-sizing: border-box; }
    .active { background: #303030; outline: 1px solid #262626; outline-offset: -1px; }
    .cell svg { display: block; width: 28px; height: 24px; overflow: visible; fill: none; }
    .foot { flex: none; display: block; width: 38px; height: 130px; fill: none; }
    .q { font: 11px "Open Sans", sans-serif; fill: #9fc4dd; }
  `;
  render() {
    return html`
      <div class="head"><svg class="chev" viewBox="0 0 20 12"><path d="M4 3l3.500 3L4 9zM8 3l3.500 3L8 9z"/></svg></div>
      <div class="grip"></div>
      ${TOOLS.map((t) => html`
        ${t.gap ? html`<div class="sep"></div>` : nothing}
        <div class="cell ${t.active ? "active" : ""}">
          <svg viewBox="6 -12 28 24">${t.art}${t.fly ? svg`<path d="M33 6v3.500h-3.500z" fill="#ddd"/>` : nothing}</svg>
        </div>`)}
      <div class="sep"></div>
      <svg class="foot" viewBox="1 778 38 130">
        <rect x="9.500" y="785.500" width="6" height="6" stroke="#ddd"/><rect x="10.500" y="786.500" width="6" height="6" fill="#111" stroke="#ccc"/>
        <rect x="5.500" y="781.500" width="8" height="8" fill="#111"/><rect x="6.500" y="782.500" width="6" height="6" fill="#eee" stroke="#fff"/>
        <path d="M27 785h4c2 0 2 1 2 5M28.500 782l-3 3 3 3M30.500 788.500l2.500 3 2.500-3" stroke="#6a6a6a" stroke-width="1.400"/>
        <rect x="5.500" y="798.500" width="19" height="19" fill="#484848" stroke="#222"/>
        <text class="q" x="12" y="812">?</text>
        <rect x="15.500" y="808.500" width="19" height="19" fill="#484848" stroke="#1e1e1e"/><rect x="20.500" y="813.500" width="9" height="9" stroke="#222"/>
        <text class="q" x="16" y="816">?</text><text class="q" x="30" y="816">?</text>
        <text class="q" x="16" y="828">?</text><text class="q" x="30" y="828">?</text>
        <rect x="6" y="834.500" width="28" height="9" fill="#222"/><rect x="7" y="835" width="8" height="8" fill="#000"/><rect x="9.500" y="837.500" width="3" height="3" fill="#484848" stroke="#777" stroke-width=".6"/>
        <defs><linearGradient id="mini"><stop offset="0" stop-color="#fff"/><stop offset="1" stop-color="#444"/></linearGradient></defs>
        <rect x="16" y="835" width="8" height="8" fill="url(#mini)"/><rect x="25" y="835" width="8" height="8" fill="#fff"/><path d="M25.500 842.500l7-7" stroke="#f00" stroke-width="1.800"/>
        <circle cx="19" cy="857" r="4" fill="#5d5d5d" stroke="#999"/><rect x="19.500" y="857.500" width="5" height="5" fill="#aaa" stroke="#bbb"/>
        <rect x="11.500" y="879" width="10" height="9.500" fill="#777" stroke="#ccc"/><rect x="16.500" y="876" width="11" height="9.500" fill="#777" stroke="#ccc"/>
      </svg>`;
  }
}

@customElement("panel-dock")
class PanelDock extends LitElement {
  static styles = css`
    :host { display: flex; flex-direction: column; box-sizing: border-box; width: 40px; border-left: 2px solid #282828; border-right: 1px solid #2a2a2a; background: #484848; }
    .head { flex: none; display: flex; justify-content: flex-end; height: 11px; background: #333; }
    .chev { width: 14px; height: 12px; fill: #b5b5b5; }
    .group { flex: none; box-sizing: border-box; border-top: 1px solid #222; box-shadow: inset 0 1px #5a5a5a; padding-bottom: 3px; }
    .last { border-bottom: 1px solid #222; }
    .grip { width: 20px; height: 3px; margin: 4px 0 2px 9px; background: repeating-linear-gradient(90deg, #151515 0 1px, transparent 1px 2px); }
    .icon { display: block; width: 28px; height: 28px; margin-left: 5px; fill: none; }
  `;
  render() {
    return html`
      <div class="head"><svg class="chev" viewBox="0 0 14 12"><path d="M5 3L1.500 6 5 9zM9.500 3L6 6l3.500 3z"/></svg></div>
      ${DOCK.map((g, i) => html`<div class="group ${i === DOCK.length - 1 ? "last" : ""}">
        <div class="grip"></div>
        ${g.map((art) => html`<svg class="icon" viewBox="-14 -14 28 28">${art}</svg>`)}
      </div>`)}`;
  }
}

@customElement("measure-field")
class MeasureField extends LitElement {
  @property() name = "";
  @property() value = "";
  static styles = css`
    :host { display: flex; align-items: center; font: 12px "Open Sans", "Noto Sans", sans-serif; }
    .name { width: 10px; height: 15px; line-height: 14px; color: #e0892f; border-bottom: 1px dotted #e0892f; margin-right: 6px; white-space: nowrap; font-size: 11px; margin-top: 3px; }
    .box { display: flex; box-sizing: border-box; width: 73px; height: 19px; border: 1px solid #262626; background: #a3a3a3; }
    .spin { width: 15px; height: 17px; flex: none; background: #555; border-right: 1px solid #262626; fill: #ddd; }
    .value { padding-left: 4px; line-height: 17px; font-size: 10.5px; letter-spacing: -0.85px; color: #000; white-space: nowrap; }
  `;
  render() {
    return html`<span class="name">${this.name}:</span>
      <span class="box"><svg class="spin" viewBox="0 0 15 17"><path d="M7.500 2.500l3 3.500h-6zM4.500 11h6l-3 3.500z"/><path d="M0 8h15v1H0z" fill="#262626"/></svg>
      <span class="value">${this.value}</span></span>`;
  }
}

@customElement("app-root")
class AppRoot extends LitElement {
  static styles = css`
    :host { display: flex; flex-direction: column; position: relative; width: 1920px; height: 1030px; overflow: hidden; background: #484848;
      font-family: "Open Sans", "Noto Sans", sans-serif; color: #ddd; }
    svg { fill: none; flex: none; }
    .menubar { display: flex; height: 31px; flex: none; border-bottom: 1px solid #222; box-sizing: border-box; align-items: flex-start; }
    .logo { width: 32px; margin-left: 8px; font: bold 21px/26px "Open Sans", sans-serif; color: #d9973f; letter-spacing: -0.5px; }
    .menus { display: flex; padding-top: 6px; font-size: 12px; line-height: 19px; }
    .menus span { box-sizing: border-box; height: 19px; text-align: center; white-space: nowrap; letter-spacing: -0.15px; }
    .open { background: #2e2e2e; border-radius: 2px 2px 0 0; }
    .vr { width: 1px; background: #333; box-shadow: 1px 0 #585858; flex: none; }
    .m-vr { height: 20px; margin: 5px 15px 0 3px; }
    .br { width: 16px; height: 15px; margin: 8px 23px 0 2px; background: #8c8c8c; outline: 1px solid #2c2c2c; font-size: 9px; line-height: 15px; text-align: center; color: #222; }
    .arr { width: 30px; height: 16px; margin-top: 8px; }
    .right { margin-left: auto; display: flex; }
    .work { margin: 5px 10px 0 12px; font-size: 12px; line-height: 20px; letter-spacing: -0.45px; white-space: nowrap; }
    .tri { width: 6px; height: 4px; margin: 15px 12px 0 0; }
    .wins { display: block; width: 103px; height: 19px; margin-right: 3px; }

    .control { display: flex; height: 35px; flex: none; box-sizing: border-box; align-items: center; border-top: 1px solid #585858; border-bottom: 1px solid #262626; padding-bottom: 1px; }
    .cgrip { width: 3px; height: 19px; margin: 0 6px 0 5px; background: repeating-linear-gradient(#151515 0 1px, transparent 1px 2px); }
    .mode { width: 79px; font-size: 10.5px; letter-spacing: -0.45px; white-space: nowrap; }
    .c-vr { height: 25px; }
    .modes { width: 52px; height: 22px; margin-left: 7px; }
    .combo { width: 60px; height: 19px; margin-left: 396px; box-sizing: border-box; border: 1px solid #262626; background: #a3a3a3; display: flex; justify-content: flex-end; }
    .drop { width: 15px; height: 17px; background: #555; border-left: 1px solid #262626; box-sizing: border-box; }
    .align { display: flex; gap: 10px; margin-right: 15.5px; }
    .align svg { width: 16px; height: 16px; }

    .body { display: flex; flex: 1; min-height: 0; }
    .doc { flex: 1; display: flex; flex-direction: column; min-width: 0; }
    .tabs { height: 20px; flex: none; background: linear-gradient(#343434, #2c2c2c); display: flex; box-sizing: border-box; border-bottom: 1px solid #272727; }
    .tab { width: 160px; background: #484848; padding-left: 9px; font-size: 11.5px; font-weight: 600; line-height: 19px; letter-spacing: -0.4px; }
    .view { display: flex; height: 927px; flex: none; }
    .vscroll { width: 17px; background: #343434; border-left: 1px solid #2a2a2a; box-sizing: border-box; display: flex; flex-direction: column; align-items: center; }
    .up { width: 15px; height: 17px; }
    .vthumb { width: 14px; height: 16px; background: #8c8c8c; margin-top: 438px; }
    .down { width: 15px; height: 17px; margin-top: auto; }

    .status { display: flex; height: 17px; flex: none; box-sizing: border-box; border-top: 1px solid #2a2a2a; background: #484848; font-size: 11px; align-items: stretch; }
    .sfield { box-sizing: border-box; height: 16px; background: #a3a3a3; color: #000; border: 1px solid #262626; padding-left: 3px; line-height: 15px; font-size: 10.5px; letter-spacing: -0.6px; }
    .zoom { width: 43px; margin-left: 4px; }
    .page { width: 43px; }
    .sdrop { width: 14px; background: #555; border: 1px solid #262626; border-left: 0; height: 16px; box-sizing: border-box; }
    .nav { width: 44px; height: 16px; }
    .nav2 { width: 42px; }
    .mode2 { width: 199px; text-align: center; line-height: 16px; font-size: 10.5px; letter-spacing: -0.5px; }
    .hs { flex: 1; display: flex; background: #343434; border-left: 1px solid #222; align-items: center; }
    .hthumb { width: 15px; height: 15px; background: #8c8c8c; margin-left: 676px; }
    .harr { width: 16px; height: 16px; }
    .hend { margin-left: auto; margin-right: 18px; }
    .pop { position: absolute; left: 145px; top: 25px; }
  `;

  private menus: [string, number][] = [
    ["Fichier", 50], ["Edition", 55], ["Objet", 46], ["Texte", 46], ["Sélection", 66], ["Effet", 43], ["Affichage", 66], ["Fenêtre", 58], ["Aide", 40],
  ];

  render() {
    const triangle = svg`<path d="M3.500 6h7L7 11.500z" fill="#ddd"/>`;
    return html`
      <div class="menubar">
        <span class="logo">Ai</span>
        <nav class="menus">${this.menus.map(([m, w]) => html`<span class=${m === "Objet" ? "open" : ""} style="width:${w}px">${m}</span>`)}</nav>
        <span class="vr m-vr"></span>
        <span class="br">Br</span>
        <svg class="arr" viewBox="571 8 30 16"><rect x="571.500" y="8.500" width="17" height="14" fill="#222" stroke="#ddd"/><path d="M573 10h8v11h-8zM583 10h4v4.500h-4zM583 16h4v5h-4z" fill="#c8c8c8"/><path d="M591 12h7l-3.500 6z" fill="#ddd"/></svg>
        <div class="right">
          <span class="vr m-vr" style="margin-right:0"></span>
          <span class="work">Les indispensables</span>
          <svg class="tri" viewBox="0 0 6 4"><path d="M0 0h6L3 3.500z" fill="#ccc"/></svg>
          <svg class="wins" viewBox="1814 0 103 19">
            <path d="M1814.500-1v17q0 2 2 2h98q2 0 2-2v-17z" fill="#565656" stroke="#1e1e1e"/><path d="M1842.500 0v18M1869.500 0v18" stroke="#1e1e1e"/>
            <path d="M1824 10h10v3h-10z" fill="#e8e8e8"/><rect x="1855" y="5" width="6" height="5" stroke="#e8e8e8" stroke-width="2"/><rect x="1851" y="8" width="6" height="5" fill="#565656" stroke="#e8e8e8" stroke-width="2"/>
            <path d="M1889 5l8 8m0-8l-8 8" stroke="#e8e8e8" stroke-width="2.400"/>
          </svg>
        </div>
      </div>

      <div class="control">
        <span class="cgrip"></span><span class="mode">Ecrêter le groupe</span><span class="vr c-vr"></span>
        <svg class="modes" viewBox="101 37 52 22"><rect x="101" y="37" width="52" height="22" fill="#3a3a3a"/><rect x="101" y="37" width="26" height="22" fill="#262626"/><rect x="127" y="37" width="26" height="22" fill="#555"/>
          <rect x="108.500" y="42.500" width="11" height="11" stroke="#ccc"/><circle cx="114" cy="48" r="3.500" stroke="#ccc"/><path d="M106 40h4v4h-4zM118 40h4v4h-4zM106 52h4v4h-4zM118 52h4v4h-4z" fill="#bbb"/>
          <circle cx="138" cy="48" r="5" stroke="#ccc"/><path d="M138 40v3M138 53v3M130 48h3" stroke="#ccc" stroke-width="2"/></svg>
        <span class="combo"><svg class="drop" viewBox="0 0 15 17">${triangle}</svg></span>
        <span class="vr c-vr" style="margin:0 11px 0 7px"></span>
        <svg width="16" height="16" viewBox="-8 -8 16 16"><circle r="6.800" fill="#8d8d8d"/><path d="M0 0L-2-6.500A6.800 6.800 0 0 1 4-5.500z" fill="#e8e8e8"/><path d="M0 0l6.500 1A6.800 6.800 0 0 1 3 6z" fill="#c8c8c8"/><path d="M0 0l-1 6.700A6.800 6.800 0 0 1-6.500 2z" fill="#555"/><circle r="1.300" fill="#333"/><circle r="6.800" stroke="#aaa" stroke-width=".6"/></svg>
        <span class="vr c-vr" style="margin:0 12px 0 10px"></span>
        <svg width="26" height="16" viewBox="0 0 26 16" style="margin-right:13px"><rect x="1.500" y="1.500" width="12" height="12" stroke="#ccc" stroke-dasharray="2 1"/><circle cx="7.500" cy="7.500" r="3.500" stroke="#ccc" stroke-dasharray="3 1.500"/><path d="M17 7h7l-3.500 4z" fill="#ccc"/></svg>
        ${ALIGN.map((g) => html`<div class="align">${g.map((a) => html`<svg viewBox="0 0 16 16">${a}</svg>`)}</div>`)}
        <span class="vr c-vr" style="margin:0 6px 0 -6px"></span>
        <svg width="19" height="19" viewBox="0 0 19 19"><path d="M2 2h15v15H2z" stroke="#ccc"/>${[0, 7, 14].map((x) => [0, 7, 14].map((y) => svg`<rect x=${x + 0.5} y=${y + 0.5} width="4" height="4" fill=${x === 7 && y === 7 ? "#ddd" : "#484848"} stroke="#ccc"/>`))}</svg>
        <measure-field name="X" value="148,505 mm" style="margin-left:10px"></measure-field>
        <measure-field name="Y" value="104,987 mm" style="margin-left:8px"></measure-field>
        <measure-field name="L" value="297,011 mm" style="margin-left:7px;margin-top:-2px"></measure-field>
        <svg width="16" height="16" viewBox="0 0 16 16" style="margin-left:10px"><path d="M6 5H4.500a3 3 0 0 0 0 6H6M10 5h1.500a3 3 0 0 1 0 6H10" stroke="#c5c5c5" stroke-width="2"/><path d="M8 1v3M8 12v3M4.500 1l1 2M11.500 1l-1 2M4.500 15l1-2M11.500 15l-1-2" stroke="#c5c5c5"/></svg>
        <measure-field name="H" value="209,973 mm" style="margin-left:11px;margin-top:-2px"></measure-field>
        <svg width="15" height="10" viewBox="0 0 15 10" style="margin:0 16px 0 auto"><path d="M0 3h5L2.500 6z" fill="#ccc"/><path d="M6 1.500h2M9 1.500h5M6 5h2M9 5h5M6 8.500h2M9 8.500h5" stroke="#ccc" stroke-width="1.300"/></svg>
      </div>

      <div class="body">
        <tool-rail></tool-rail>
        <div class="doc">
          <div class="tabs"><span class="tab">Carte-Ethiopie.pdf</span></div>
          <div class="view">
            <map-canvas></map-canvas>
            <div class="vscroll">
              <svg class="up" viewBox="0 0 15 17"><path d="M3 12h9L7.500 6z" fill="#ddd"/></svg>
              <div class="vthumb"></div>
              <svg class="down" viewBox="0 0 15 17"><path d="M3 5h9l-4.500 5.500z" fill="#ddd"/></svg>
            </div>
          </div>
          <div class="status">
            <span class="sfield zoom">100%</span><svg class="sdrop" viewBox="0 0 14 16">${triangle}</svg>
            <svg class="nav" viewBox="0 0 44 16"><path d="M8.500 3.500v9M17 3.500L10.500 8l6.500 4.500zM34 3.500L28.500 8l5.500 4.500z" fill="#6d6d6d" stroke="#6d6d6d"/></svg>
            <span class="sfield page">1</span><svg class="sdrop" viewBox="0 0 14 16">${triangle}</svg>
            <svg class="nav nav2" viewBox="0 0 42 16"><path d="M11 3.500l5.500 4.500-5.500 4.500zM25 3.500l5.500 4.500-5.500 4.500zM32.500 3.500v9" fill="#6d6d6d" stroke="#6d6d6d"/></svg>
            <span class="vr"></span><span class="mode2">Sélection</span><span class="vr"></span>
            <svg class="harr" viewBox="0 0 16 16"><path d="M6 3.500l5 4.500-5 4.500z" fill="#ddd"/></svg>
            <div class="hs"><svg class="harr" viewBox="0 0 16 16"><path d="M11 3.500L6 8l5 4.500z" fill="#ddd"/></svg><span class="hthumb"></span>
              <svg class="harr hend" viewBox="0 0 16 16"><path d="M6 3.500l5 4.500-5 4.500z" fill="#ddd"/></svg></div>
          </div>
        </div>
        <panel-dock></panel-dock>
      </div>
      <object-menu class="pop"></object-menu>`;
  }
}
